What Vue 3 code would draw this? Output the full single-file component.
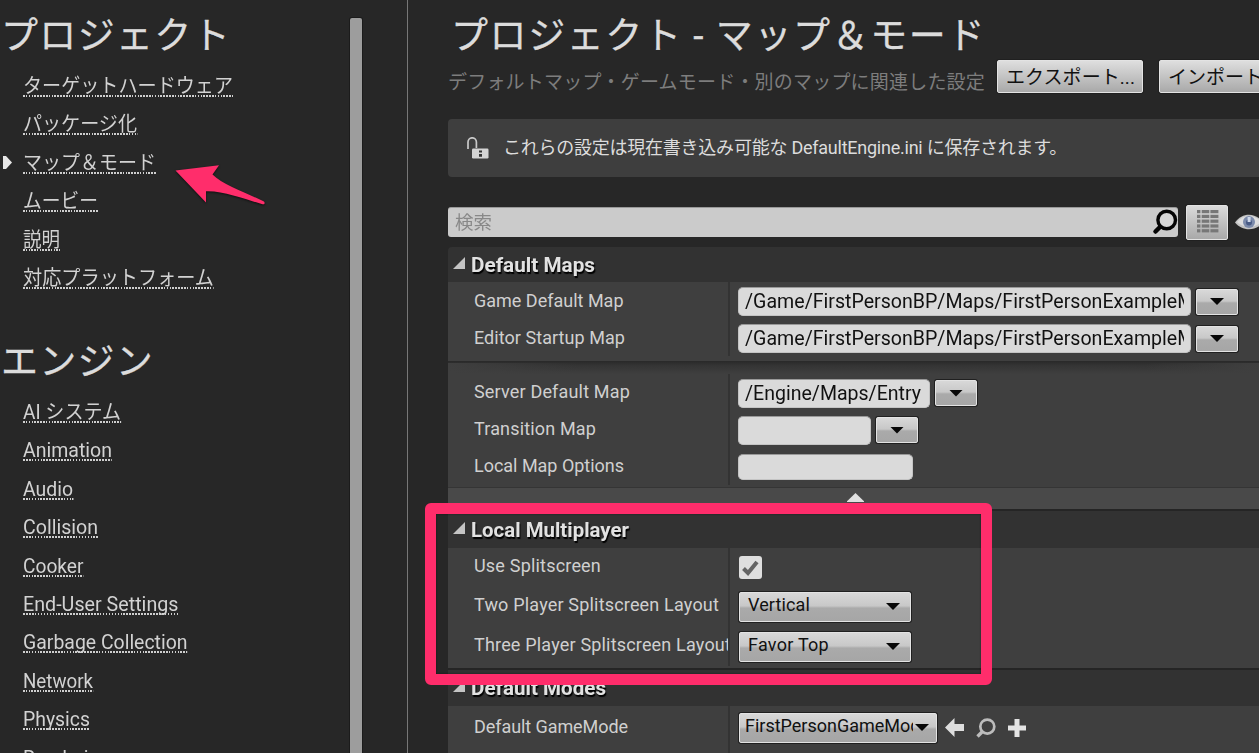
<script setup>
// Fits a text run to a width: .track spreads the letters, otherwise the glyphs are condensed
const vFit = {
  mounted(el, { value, modifiers }) {
    if (!value) return
    const natural = el.getBoundingClientRect().width
    if (modifiers.track) {
      el.style.letterSpacing = (value - natural) / el.textContent.length + 'px'
    } else {
      el.style.transform = `scaleX(${value / natural})`
    }
  },
}

const groups = [
  {
    title: 'プロジェクト', width: 230,
    items: [
      { t: 'ターゲットハードウェア', w: 210 },
      { t: 'パッケージ化', w: 114 },
      { t: 'マップ＆モード', w: 133, current: true },
      { t: 'ムービー', w: 75 },
      { t: '説明', w: 37 },
      { t: '対応プラットフォーム', w: 191 },
    ],
  },
  {
    title: 'エンジン', width: 153,
    items: [
      { t: 'AI システム', w: 98 },
      { t: 'Animation', w: 89 },
      { t: 'Audio', w: 50 },
      { t: 'Collision', w: 75 },
      { t: 'Cooker', w: 60.5 },
      { t: 'End-User Settings', w: 155.5 },
      { t: 'Garbage Collection', w: 164.5 },
      { t: 'Network', w: 70 },
      { t: 'Physics', w: 67 },
      { t: 'Rendering', w: 87 },
    ],
  },
]

const basicMaps = [
  { label: 'Game Default Map', w: 149.5, value: '/Game/FirstPersonBP/Maps/FirstPersonExampleMap', vw: 471, size: 'long' },
  { label: 'Editor Startup Map', w: 151, value: '/Game/FirstPersonBP/Maps/FirstPersonExampleMap', vw: 471, size: 'long' },
]
const advancedMaps = [
  { label: 'Server Default Map', w: 156, value: '/Engine/Maps/Entry', vw: 176, size: 'mid' },
  { label: 'Transition Map', w: 122, value: '', size: 'short' },
]
const layouts = [
  { label: 'Two Player Splitscreen Layout', w: 245, value: 'Vertical', vw: 62 },
  { label: 'Three Player Splitscreen Layout', w: 257, value: 'Favor Top', vw: 81 },
]
</script>

<template>
  <div class="window">
    <aside class="sidebar">
      <nav>
        <section v-for="g in groups" :key="g.title" class="group">
          <h2><span v-fit.track="g.width">{{ g.title }}</span></h2>
          <div v-for="i in g.items" :key="i.t" class="nav-row">
            <svg class="marker" viewBox="0 0 9 13"><path v-if="i.current" d="M0 0h3l6 6.5L3 13H0z" fill="#e6e6e6" /></svg>
            <a v-fit="i.w">{{ i.t }}</a>
          </div>
        </section>
      </nav>
      <div class="scrollbar"></div>
    </aside>

    <main>
      <h1><span v-fit.track="535">プロジェクト - マップ＆モード</span></h1>
      <div class="subhead">
        <p><span v-fit.track="537">デフォルトマップ・ゲームモード・別のマップに関連した設定</span></p>
        <button class="btn export"><span v-fit.track="129">エクスポート...</span></button>
        <button class="btn import"><span v-fit.track="110">インポート...</span></button>
      </div>

      <div class="notice">
        <svg width="22" height="22" viewBox="0 0 22 22">
          <path d="M1 12V5a4.2 4.2 0 0 1 8.4 0v6" fill="none" stroke="#c9c9c9" stroke-width="1.7" />
          <rect x="5" y="11.5" width="16.5" height="10" rx="1.2" fill="#d4d4d4" />
          <path d="M12 13.5h3v2h-3zM12 17h3v2.7h-3z" fill="#333" />
        </svg>
        <span v-fit.track="564">これらの設定は現在書き込み可能な DefaultEngine.ini に保存されます。</span>
      </div>

      <div class="search-row">
        <div class="search">
          <span v-fit="37">検索</span>
          <svg width="26" height="26" viewBox="0 0 26 26">
            <path d="M9 17 3.5 22.5" stroke="#050505" stroke-width="4.5" stroke-linecap="round" />
            <circle cx="14.7" cy="11" r="8.8" fill="#d6d6d6" stroke="#050505" stroke-width="3.4" />
          </svg>
        </div>
        <button class="btn grid-btn">
          <svg width="22" height="24" viewBox="0 0 22 24" fill="#777">
            <g v-for="n in 5" :key="n" :transform="`translate(0 ${(n - 1) * 4.8})`">
              <rect width="3.4" height="3.2" /><rect x="4.7" width="7.6" height="3.2" /><rect x="13.4" width="8" height="3.2" />
            </g>
          </svg>
        </button>
        <svg class="eye" width="28" height="18" viewBox="0 0 28 18">
          <path d="M0 9.5C7-1 21-1 28 9.5 21 18.5 7 18.5 0 9.5z" fill="#c4c4c4" />
          <path d="M2 9C8 1 20 1 26 9 20 15 8 15 2 9z" fill="#dedede" />
          <circle cx="14" cy="9" r="6" fill="#7c8bab" />
          <circle cx="14" cy="9.5" r="3" fill="#495b85" />
          <rect x="12.6" y="4" width="3" height="5" fill="#cfd9ea" />
        </svg>
      </div>

      <section class="category">
        <header><svg class="tri" viewBox="0 0 12 12"><path d="M12 0v12H0z" /></svg><span v-fit="124">Default Maps</span></header>
        <div class="rows basic">
          <div v-for="r in basicMaps" :key="r.label" class="row">
            <label><span v-fit.track="r.w">{{ r.label }}</span></label>
            <div class="value">
              <div class="input" :class="r.size"><div class="clip"><span v-fit="r.vw">{{ r.value }}</span></div></div>
              <button class="btn drop"><i class="caret"></i></button>
            </div>
          </div>
        </div>
        <div class="rows advanced">
          <div v-for="r in advancedMaps" :key="r.label" class="row">
            <label><span v-fit.track="r.w">{{ r.label }}</span></label>
            <div class="value">
              <div class="input" :class="r.size"><div class="clip"><span v-fit="r.vw">{{ r.value }}</span></div></div>
              <button class="btn drop"><i class="caret"></i></button>
            </div>
          </div>
          <div class="row last">
            <label><span v-fit.track="150">Local Map Options</span></label>
            <div class="value"><div class="input plain"></div></div>
          </div>
        </div>
        <div class="collapse"><svg width="17" height="9" viewBox="0 0 17 9"><path d="M8.5 0 17 8.2V9H0v-.8z" fill="#e0e0e0" /></svg></div>
      </section>

      <section class="category">
        <header class="second"><svg class="tri" viewBox="0 0 12 12"><path d="M12 0v12H0z" /></svg><span v-fit="158">Local Multiplayer</span></header>
        <div class="rows multi">
          <div class="row check">
            <label><span v-fit.track="127">Use Splitscreen</span></label>
            <div class="value">
              <div class="checkbox"><svg width="17" height="16" viewBox="0 0 17 16"><path d="M1.5 8.5 6 13 15 2" fill="none" stroke="#636363" stroke-width="4" /></svg></div>
            </div>
          </div>
          <div v-for="r in layouts" :key="r.label" class="row tall">
            <label><span v-fit.track="r.w">{{ r.label }}</span></label>
            <div class="value"><button class="btn select"><span v-fit.track="r.vw">{{ r.value }}</span><i class="caret"></i></button></div>
          </div>
        </div>
      </section>

      <section class="category">
        <header class="third"><svg class="tri" viewBox="0 0 12 12"><path d="M12 0v12H0z" /></svg><span v-fit="135">Default Modes</span></header>
        <div class="rows modes">
          <div class="row">
            <label><span v-fit.track="154">Default GameMode</span></label>
            <div class="value">
              <button class="btn select mode"><div class="mode-clip"><span v-fit.track="185">FirstPersonGameMode</span></div><i class="caret"></i></button>
              <svg class="ic arrow-l" width="19" height="19" viewBox="0 0 19 19"><path d="M0 9.5 9.5 0v6H19v7H9.5v6z" fill="#dedede" /></svg>
              <svg class="ic lens" width="20" height="20" viewBox="0 0 20 20"><circle cx="11.3" cy="8.6" r="7" fill="none" stroke="#bcbcbc" stroke-width="2.7" /><path d="m6.5 13.5-5 5" stroke="#bcbcbc" stroke-width="3.4" /></svg>
              <svg class="ic plus" width="18" height="18" viewBox="0 0 18 18"><path d="M6.5 0h5v6.5H18v5h-6.5V18h-5v-6.5H0v-5h6.5z" fill="#e4e4e4" /></svg>
            </div>
          </div>
        </div>
      </section>
    </main>

    <svg class="pointer" width="100" height="50" viewBox="0 0 100 50">
      <path d="M5.5 10.5 49 5.2 42.5 14.5C52 24 72 31 93.5 41.3c2 1 1.2 3.4-1 2.9C73 38.5 53 30.5 36 31.2V42.5z" fill="#ff2d6b" />
    </svg>
    <div class="highlight"></div>
  </div>
</template>

<style>
body { background: #272727; overflow: hidden; }
</style>

<style scoped>
.window {
  position: relative; display: flex; width: 1259px; height: 753px; overflow: hidden;
  background: #272727; color: #dcdcdc; font-family: Roboto, "Noto Sans CJK JP", sans-serif; font-size: 18px;
}
.window * { box-sizing: border-box; }
span, a { display: inline-block; white-space: nowrap; transform-origin: 0 50%; }
h1, h2, p { margin: 0; font-weight: 400; white-space: nowrap; }
h1, h2 { -webkit-text-stroke: .3px #dcdcdc; }
button { font: inherit; }

.sidebar { display: flex; justify-content: space-between; width: 408px; padding-right: 45px; border-right: 1px solid #777; flex: none; }
.group { height: 326px; }
h2 { height: 73px; padding: 11px 0 0 1px; font-size: 37px; line-height: 52px; }
.nav-row { display: flex; align-items: flex-start; height: 38.4px; font-size: 20px; line-height: 26px; }
.marker { width: 9px; height: 13px; margin: 6px 11px 0 3px; overflow: visible; }
.nav-row a {
  height: 24px; color: #d2d2d2; margin-left: -.5px;
  background: repeating-linear-gradient(90deg, #cfcfcf 0 1.7px, transparent 1.7px 3px) 0 100% / 100% 2px no-repeat;
}
.scrollbar { width: 12px; margin-top: 18px; background: #9d9d9d; border-radius: 2px 2px 0 0; box-shadow: 0 0 0 1px #1b1b1b; }

main { width: 851px; padding-left: 40px; flex: none; }
h1 { height: 60px; padding: 11px 0 0 3px; font-size: 37px; line-height: 52px; }
.subhead { display: flex; height: 59px; }
.subhead p { width: 549px; flex: none; padding-top: 9px; color: #7d7d7d; line-height: 28px; font-size: 19px; }
.btn {
  display: flex; align-items: center; padding: 0; flex: none; color: #111; border: 1px solid #e3e3e3; border-radius: 2px;
  background: linear-gradient(#d8d8d8, #c8c8c8 46%, #aaa 54%, #a6a6a6); box-shadow: 0 0 0 1px #202020;
}
.export, .import { width: 146px; height: 33px; padding: 0 0 3px 8px; font-size: 19px; background: linear-gradient(#dedede, #a9a9a9); }
.import { margin-left: 16px; }

.notice { display: flex; align-items: center; height: 58px; padding: 0 0 2px 19px; background: #3e3e3e; border-radius: 4px 0 0 4px; }
.notice svg { margin: 2px 14px 0 0; }
.notice span { margin-top: -2px; }

.search-row { display: flex; align-items: center; height: 70px; padding-top: 20px; }
.search {
  display: flex; align-items: center; justify-content: space-between; width: 730px; height: 30px; padding: 0 0 2px 7px;
  flex: none; background: #cbcbcb; color: #888; font-size: 18px; border-radius: 3px; border-top: 1px solid #999;
}
.search span { margin-top: -2px; }
.grid-btn { width: 42px; height: 35px; margin-left: 8px; padding-left: 10px; background: linear-gradient(#dadada, #a9a9a9); }
.eye { flex: none; margin-left: 7px; }

header { display: flex; align-items: center; height: 35px; padding-left: 5px; background: #323232; font-weight: 700; font-size: 20px; text-shadow: 1px 2px 1px #000; color: #e2e2e2; }
.tri { width: 12px; height: 12px; margin: -4px 6px 0 0; fill: #c4c4c4; }
.category:first-of-type header { border-radius: 4px 0 0 0; }
header.second { height: 39px; border-top: 2px solid #252525; }
header.third { height: 38px; border-top: 2px solid #252525; }
.rows { background: #3f3f3f; }
.basic { height: 79px; }
.advanced {
  height: 127px; padding-top: 13px; border-bottom: 1px solid #353535;
  background:
    linear-gradient(90deg, #3f3f3f, transparent 16%, transparent 86%, #3f3f3f) 0 2px / 100% 13px no-repeat,
    linear-gradient(#292929, #343434 35%, #3f3f3f) 0 0 / 100% 13px no-repeat, #3f3f3f;
}
.multi { height: 120px; }
.modes { height: 60px; }
.row { display: flex; height: 37px; }
label { width: 282px; height: 100%; padding-left: 26px; overflow: hidden; border-right: 2px solid #333; line-height: 37px; flex: none; color: #d0d0d0; }
.advanced label { line-height: 36px; }
.value { display: flex; align-items: center; padding: 2px 0 0 8px; }
.advanced .value { padding-top: 1px; }
.input { height: 29px; padding: 0 6px; background: #dadada; border-radius: 5px; border: 1px solid #c4c4c4; border-top-color: #999; color: #111; font-size: 20px; line-height: 26px; flex: none; }
.clip { overflow: hidden; height: 28px; }
.long { width: 453px; }
.mid { width: 192px; }
.short { width: 133px; }
.plain { width: 175px; height: 26px; margin-top: -1px; }
.drop { width: 42px; height: 26px; margin-left: 5px; justify-content: center; }
.caret { width: 14px; height: 7px; background: #080808; clip-path: polygon(0 0, 100% 0, 50% 100%); }
.collapse { display: flex; justify-content: center; height: 21px; padding: 5px 0 0 3px; background: #494949; }
.row.check { height: 38px; }
.row.check label { line-height: 36px; }
.row.check .value { padding-top: 1px; }
.row.tall { height: 40px; }
.row.tall label { line-height: 38px; }
.row.tall .value { padding-top: 1px; }
.checkbox { display: flex; align-items: center; justify-content: center; width: 23px; height: 23px; margin-left: 1px; background: #dedede; border-radius: 3px; }
.select { width: 172px; height: 30px; margin-left: 1px; padding: 0 10px 4px 8px; justify-content: space-between; }
.select .caret { margin-top: 4px; }
.mode { width: 198px; padding: 0 7px 4px 5px; }
.mode-clip { width: 168px; overflow: hidden; }
.modes .row { height: 60px; }
.modes label { line-height: 41px; }
.modes .value { height: 43px; padding-top: 0; }
.ic { flex: none; }
.arrow-l { margin-left: 8px; }
.lens { margin-left: 12px; }
.plus { margin-left: 12px; }

.pointer { position: absolute; left: 170px; top: 160px; filter: drop-shadow(0 1px 1px rgba(0, 0, 0, .6)); }
.highlight { position: absolute; left: 425px; top: 503px; width: 567px; height: 182px; border: 11px solid #ff2d6b; border-radius: 6px; }
.highlight::after { content: ""; position: absolute; inset: 0; box-shadow: inset 0 0 2px rgba(0, 0, 0, .5); }
</style>
